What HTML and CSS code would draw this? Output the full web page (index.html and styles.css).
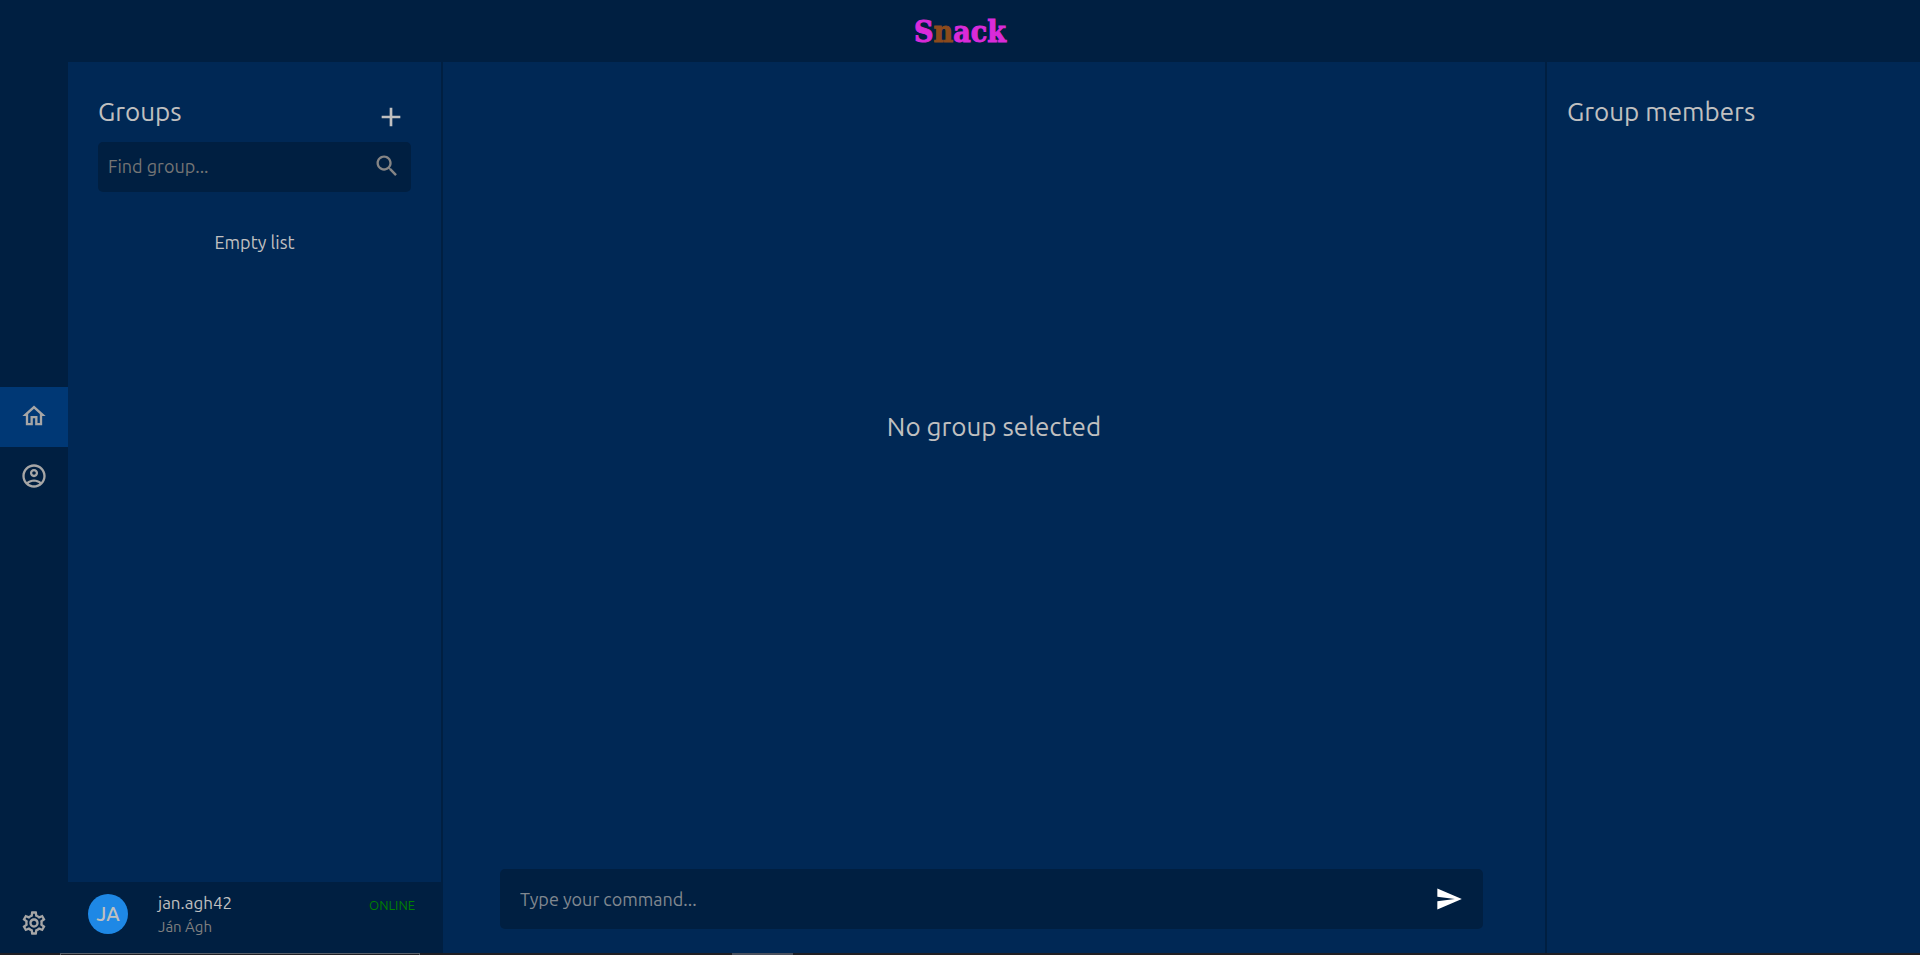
FILE: index.html
```html
<!DOCTYPE html>
<html lang="en">
<head>
<meta charset="utf-8">
<title>Snack</title>
<link rel="stylesheet" href="styles.css">
</head>
<body>
<div class="app">
  <nav class="rail" aria-label="Main">
    <div class="rail-links">
      <a class="rail-item rail-item-active" href="#home" aria-label="Home">
        <svg class="icon" viewBox="0 0 24 24"><path d="M12 5.69l5 4.5V18h-2v-6H9v6H7v-7.81l5-4.5M12 3L2 12h3v8h6v-6h2v6h6v-8h3L12 3z"/></svg>
      </a>
      <a class="rail-item" href="#profile" aria-label="Profile">
        <svg class="icon" viewBox="0 0 24 24"><path d="M12 2C6.48 2 2 6.48 2 12s4.48 10 10 10 10-4.48 10-10S17.52 2 12 2zM7.35 18.5C8.66 17.56 10.26 17 12 17s3.34.56 4.65 1.5c-1.31.94-2.91 1.5-4.65 1.5s-3.34-.56-4.65-1.5zm10.79-1.38C16.45 15.8 14.32 15 12 15s-4.45.8-6.14 2.12C4.7 15.73 4 13.95 4 12c0-4.42 3.58-8 8-8s8 3.58 8 8c0 1.95-.7 3.73-1.86 5.12z"/><path d="M12 6c-1.93 0-3.5 1.57-3.5 3.5S10.07 13 12 13s3.5-1.57 3.5-3.5S13.93 6 12 6zm0 5c-.83 0-1.5-.67-1.5-1.5S11.17 8 12 8s1.5.67 1.5 1.5S12.830 11 12 11z"/></svg>
      </a>
    </div>
    <a class="rail-item rail-settings" href="#settings" aria-label="Settings">
      <svg class="icon" viewBox="0 0 24 24"><path d="M19.430 12.980c.04-.32.07-.64.07-.98 0-.34-.03-.66-.07-.98l2.110-1.650c.19-.15.24-.42.12-.64l-2-3.460c-.09-.16-.26-.25-.44-.25-.06 0-.12.010-.17.030l-2.490 1c-.52-.4-1.080-.73-1.690-.98l-.38-2.650C14.460 2.180 14.250 2 14 2h-4c-.25 0-.46.18-.49.42l-.38 2.650c-.61.25-1.170.59-1.690.98l-2.490-1c-.06-.02-.12-.03-.18-.03-.17 0-.34.09-.43.25l-2 3.460c-.13.22-.07.49.12.64l2.110 1.650c-.04.32-.07.65-.07.98s.03.66.07.98l-2.110 1.650c-.19.15-.24.42-.12.64l2 3.460c.09.16.26.25.44.25.06 0 .12-.01.17-.03l2.490-1c.52.4 1.080.73 1.690.98l.38 2.650c.03.24.24.42.49.42h4c.25 0 .46-.18.49-.42l.38-2.650c.61-.25 1.170-.59 1.690-.98l2.490 1c.06.02.12.03.18.03.17 0 .34-.09.43-.25l2-3.460c.12-.22.07-.49-.12-.64l-2.110-1.650zm-1.980-1.710c.04.31.05.52.05.73 0 .21-.02.43-.05.73l-.14 1.130.89.7 1.080.84-.7 1.210-1.270-.51-1.040-.42-.9.68c-.43.32-.84.56-1.250.73l-1.060.43-.16 1.130-.2 1.350h-1.400l-.19-1.350-.16-1.130-1.060-.43c-.43-.18-.83-.41-1.230-.71l-.91-.7-1.060.43-1.270.51-.7-1.210 1.080-.84.89-.7-.14-1.130c-.03-.31-.05-.54-.05-.74s.02-.43.05-.73l.14-1.130-.89-.7-1.080-.84.7-1.210 1.270.51 1.040.42.9-.68c.43-.32.84-.56 1.250-.73l1.060-.43.16-1.130.2-1.350h1.390l.19 1.350.16 1.130 1.060.43c.43.18.83.41 1.230.71l.91.7 1.060-.43 1.270-.51.7 1.210-1.070.85-.89.7.14 1.130zM12 8c-2.210 0-4 1.790-4 4s1.790 4 4 4 4-1.790 4-4-1.790-4-4-4zm0 6c-1.100 0-2-.9-2-2s.9-2 2-2 2 .9 2 2-.9 2-2 2z"/></svg>
    </a>
  </nav>

  <header class="topbar">
    <div class="logo">S<span class="logo-brown">n</span>ack</div>
  </header>

  <aside class="groups">
    <div class="groups-body">
      <div class="groups-head">
        <h2 class="heading">Groups</h2>
        <button class="icon-button" type="button" aria-label="Add group">
          <svg class="icon-large" viewBox="0 0 24 24"><path d="M19 13h-6v6h-2v-6H5v-2h6V5h2v6h6v2z"/></svg>
        </button>
      </div>
      <form class="search">
        <input class="search-input" type="text" placeholder="Find group..." aria-label="Find group">
        <button class="icon-button search-button" type="button" aria-label="Search">
          <svg class="icon" viewBox="0 0 24 24"><path d="M15.500 14h-.79l-.28-.27C15.410 12.590 16 11.110 16 9.500 16 5.910 13.090 3 9.500 3S3 5.910 3 9.500 5.910 16 9.500 16c1.610 0 3.090-.59 4.230-1.570l.27.28v.79l5 4.990L20.490 19l-4.990-5zm-6 0C7.010 14 5 11.990 5 9.500S7.010 5 9.500 5 14 7.010 14 9.500 11.990 14 9.500 14z"/></svg>
        </button>
      </form>
      <p class="empty">Empty list</p>
    </div>
    <div class="profile">
      <div class="avatar">JA</div>
      <div class="profile-names">
        <div class="profile-user">jan.agh42</div>
        <div class="profile-name">Ján Ágh</div>
      </div>
      <div class="status">ONLINE</div>
    </div>
  </aside>

  <main class="chat">
    <div class="chat-body"><h2 class="heading">No group selected</h2></div>
    <form class="command">
      <input class="command-input" type="text" placeholder="Type your command..." aria-label="Type your command">
      <button class="icon-button send-button" type="button" aria-label="Send">
        <svg class="icon" viewBox="0 0 24 24"><path d="M2.010 21L23 12 2.010 3 2 10l15 2-15 2z"/></svg>
      </button>
    </form>
  </main>

  <aside class="members">
    <h2 class="heading">Group members</h2>
  </aside>

  <div class="dock"><span class="dock-window"></span><span class="dock-tab"></span></div>
</div>
</body>
</html>
```
FILE: styles.css
```css
* { box-sizing: border-box; }

body {
  margin: 0;
  background: #002855;
  color: #c0c0c0;
  font-family: Ubuntu, "Noto Sans", sans-serif;
  font-size: 18px;
}

.app {
  display: grid;
  grid-template-columns: 68px 375px minmax(0, 1fr) 375px;
  grid-template-rows: 62px minmax(0, 1fr) 2px;
  height: 100vh;
}

svg { display: block; fill: currentColor; }
.icon { width: 28px; height: 28px; }
.icon-large { width: 32px; height: 32px; }

.icon-button {
  padding: 0;
  border: 0;
  background: none;
  color: inherit;
  cursor: pointer;
}

.heading {
  margin: 0;
  font-size: 26px;
  font-weight: 400;
  line-height: 36px;
}

.topbar {
  grid-column: 1 / -1;
  grid-row: 1;
  display: flex;
  align-items: center;
  justify-content: center;
  background: #001f41;
}

.logo {
  padding-top: 2px;
  color: #d92bd9;
  font-family: "DejaVu Serif Condensed", "DejaVu Serif", serif;
  font-size: 30px;
  font-weight: 700;
  line-height: 32px;
  -webkit-text-stroke: 1px;
}
.logo-brown { color: #8b4a1c; }

.rail {
  grid-column: 1;
  grid-row: 1 / 3;
  z-index: 1;
  display: flex;
  flex-direction: column;
  background: #001f41;
  color: #a6a6a6;
}
.rail-links {
  flex: 1;
  display: flex;
  flex-direction: column;
  justify-content: center;
}
.rail-item {
  display: flex;
  align-items: center;
  justify-content: center;
  height: 60px;
  padding-bottom: 2px;
  color: inherit;
}
.rail-item-active { background: #003875; }
.rail-settings { padding-bottom: 0; }

.groups {
  grid-column: 2;
  grid-row: 2;
  display: flex;
  flex-direction: column;
  border-right: 2px solid #001f41;
}
.groups-body { flex: 1; padding: 32px 30px 0; }
.groups-head {
  display: flex;
  justify-content: space-between;
  padding-right: 4px;
  height: 48px;
}
.groups-head .icon-button { margin-top: 7px; align-self: flex-start; }

.search {
  display: flex;
  align-items: center;
  height: 50px;
  padding: 0 10px 2px;
  border-radius: 5px;
  background: #001f41;
}
.search-input, .command-input {
  flex: 1;
  min-width: 0;
  padding: 0;
  border: 0;
  outline: 0;
  background: none;
  color: inherit;
  font: inherit;
}
.search-input::placeholder { color: #757575; opacity: 1; }
.search-button { color: #858585; }

.empty {
  margin: 38px 0 0;
  line-height: 24px;
  text-align: center;
}

.profile {
  display: flex;
  gap: 30px;
  height: 71px;
  padding: 12px 26px 0 20px;
  background: #001f41;
}
.avatar {
  width: 40px;
  height: 40px;
  border-radius: 50%;
  background: #1e88e5;
  font-size: 20px;
  font-weight: 500;
  line-height: 40px;
  text-align: center;
}
.profile-names { flex: 1; margin-top: -3px; }
.profile-user { font-size: 17px; line-height: 24px; }
.profile-name { color: #808080; font-size: 15px; line-height: 24px; }
.status { color: #008000; font-size: 13px; line-height: 22px; }

.chat {
  grid-column: 3;
  grid-row: 2;
  display: flex;
  flex-direction: column;
}
.chat-body {
  flex: 1;
  display: flex;
  align-items: center;
  justify-content: center;
  padding-bottom: 78px;
}
.command {
  display: flex;
  align-items: center;
  height: 60px;
  margin: 0 62px 24px 57px;
  padding: 0 20px;
  border-radius: 5px;
  background: #001f41;
}
.command-input::placeholder { color: #808890; opacity: 1; }
.send-button { color: #fff; }

.members {
  grid-column: 4;
  grid-row: 2;
  padding: 32px 20px;
  border-left: 2px solid #001f41;
}

.dock {
  grid-column: 1 / -1;
  grid-row: 3;
  display: flex;
  padding-left: 60px;
  background: #1f1f24;
}
.dock-window { width: 360px; border: 1px solid #5a6068; border-bottom: 0; }
.dock-tab { width: 61px; margin-left: 312px; background: #4a505c; }
```
